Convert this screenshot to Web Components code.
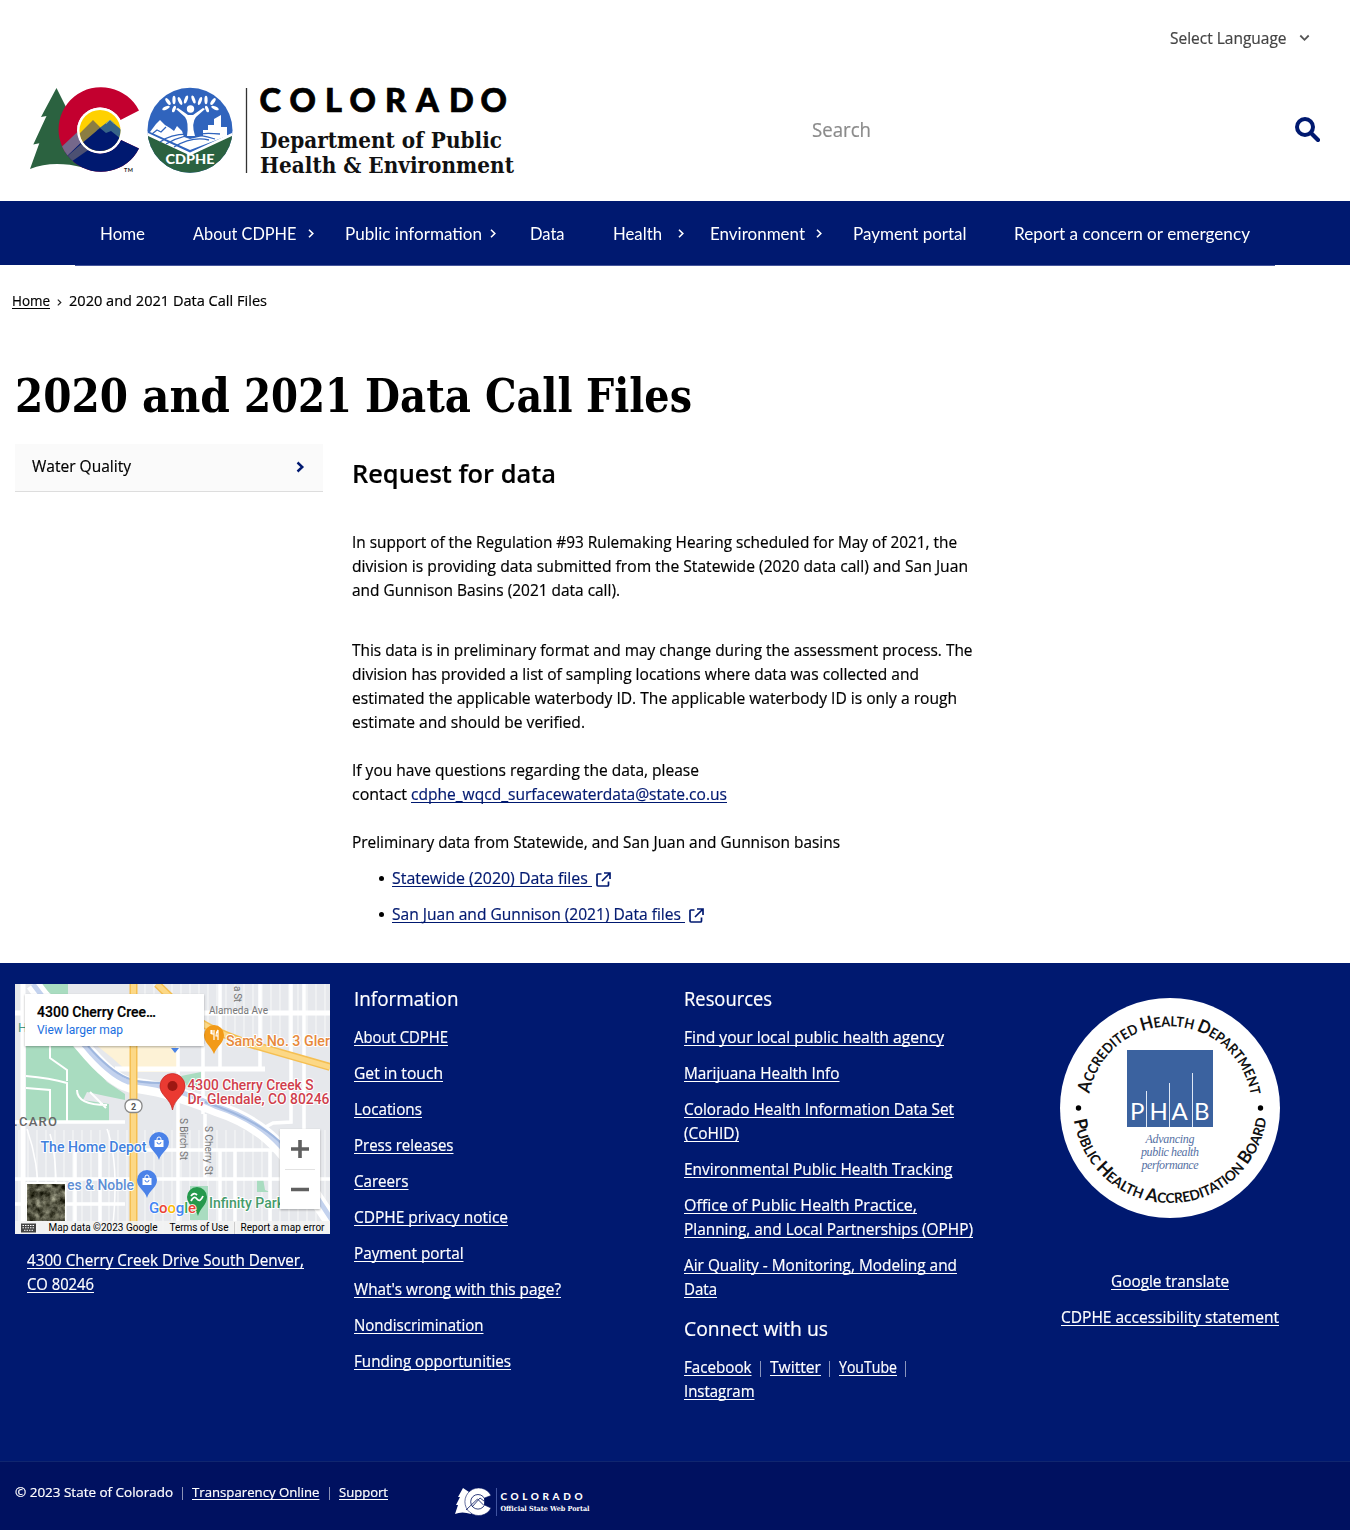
<!DOCTYPE html>
<html lang="en">
<head>
<meta charset="utf-8">
<title>2020 and 2021 Data Call Files | Colorado Department of Public Health and Environment</title>
<style>
html,body{margin:0;padding:0;background:#fff}
body{font:16px/24px "Open Sans","Noto Sans",sans-serif;color:#000;--navy:#001970}
</style>
</head>
<body>
<cdphe-page></cdphe-page>
<script>
/* Single line of copy, set to a fixed measure given in the w attribute. */
class FitText extends HTMLElement {
  connectedCallback() {
    if (this.shadowRoot) return;
    this.attachShadow({mode: 'open'}).innerHTML = `<style>
      :host{display:inline-block;white-space:nowrap;-webkit-text-stroke:var(--ink,.2px)}
      span{display:inline-block;transform-origin:0 50%;white-space:pre}
      :host([u]) span{text-decoration:underline;text-decoration-thickness:1px;text-underline-offset:2px;text-decoration-skip-ink:none}
    </style><span><slot></slot></span>`;
  }
  fit() {
    const w = +this.getAttribute('w'), s = this.shadowRoot.querySelector('span');
    if (!w || !s.offsetWidth) return;
    const n = s.getBoundingClientRect().width;
    this.style.width = w + 'px';
    s.style.transform = `scaleX(${w / n})`;
  }
}
customElements.define('fit-text', FitText);

const define = (name, html) => customElements.define(name, class extends HTMLElement {
  connectedCallback() {
    if (!this.shadowRoot) this.attachShadow({mode: 'open'}).innerHTML = html;
  }
});

define('cdphe-logo', `<style>:host{display:block;width:486px;height:88px}svg{display:block;overflow:visible}</style>
<svg width="486" height="88" viewBox="0 0 486 88">
<defs><clipPath id="c"><path d="M109 22.500A42.500 42.300 0 1 0 109 60.500L91 52A23 23 0 1 1 90.500 32Z"/></clipPath>
<clipPath id="d"><circle cx="70" cy="42.500" r="20.500"/></clipPath><clipPath id="e"><circle cx="160" cy="42.300" r="42.500"/></clipPath></defs>
<path fill="#2b6240" d="M26.500 0 11 29 16.500 28 3.300 56.500 9.300 55.200 0 81Q23 72 53 79.500L46 30 39 25Z"/>
<g clip-path="url(#c)"><path fill="#c3002f" d="M20-5h100v100H20z"/><path fill="#001970" d="M28 72 52 46h70v50H28z"/><path fill="#75688b" d="M26 64 58 34 62 44 33 72z"/><path fill="#4c5072" d="M33 72 58 50 64 58 38 76z"/></g>
<circle cx="70" cy="42.500" r="23" fill="#fff"/>
<g clip-path="url(#d)"><path fill="#ffd100" d="M45 15h50v50H45z"/><path fill="#8b7d42" d="M45 50 63 32 70 39 76 44 62 65H45z"/><path fill="#376487" d="M67 42 80 32 94 44V60H60z"/><path fill="#001970" d="M44 62 70 40 76 45 81 43 96 55V70H44z"/></g>
<path d="M76 36 80 32 84 35.500" fill="none" stroke="#6f9d9c" stroke-width="1"/>
<text x="94" y="83.500" font-family="Lato" font-weight="700" font-size="5.500" textLength="9" fill="#222">TM</text>
<g clip-path="url(#e)"><path fill="#3064bd" d="M115-2h90v90h-90z"/><path fill="#2b6240" d="M115 45 160 67 205 45V90H115z"/>
<path fill="none" stroke="#fff" stroke-width="2.600" d="M116 45.500 160 66 204 45.500"/>
<path fill="#fff" d="M120 44 126 36 130 32 135 37 140 40 144 43 147 38 152 43 154 49 160 51 173 48V42H178V37H184V31L191 27V39H197V48L160 62Z"/>
<path fill="none" stroke="#3064bd" stroke-width="1.300" d="M130 54Q149 40 185 51M136 56Q158 43 190 46M144 59Q162 48 179 52M122 46 127 42 131 44 136 39"/>
<path fill="#fff" d="M157 48Q159 34 155 29L146 21 148 20 158 27H163L173 20 175 21 166 29Q161 35 165 48Z"/><circle cx="160.500" cy="21" r="3.700" fill="#fff"/>
<g fill="#fff"><ellipse cx="138" cy="13.500" rx="1.700" ry="4" transform="rotate(-35 138 13.500)"/><ellipse cx="144" cy="12" rx="1.600" ry="4.200"/><ellipse cx="150" cy="13" rx="1.600" ry="4.200" transform="rotate(-25 150 13)"/><ellipse cx="156" cy="11.500" rx="1.600" ry="4.200" transform="rotate(20 156 11.500)"/><ellipse cx="163.500" cy="11.500" rx="1.600" ry="4.200" transform="rotate(-20 163.500 11.500)"/><ellipse cx="170" cy="13" rx="1.600" ry="4.200" transform="rotate(20 170 13)"/><ellipse cx="176" cy="12" rx="1.600" ry="4.200"/><ellipse cx="183" cy="13.500" rx="1.700" ry="4" transform="rotate(35 183 13.500)"/><ellipse cx="136" cy="20" rx="1.600" ry="4" transform="rotate(65 136 20)"/><ellipse cx="144" cy="21" rx="1.600" ry="3.500" transform="rotate(20 144 21)"/><ellipse cx="177" cy="21" rx="1.600" ry="3.500" transform="rotate(-20 177 21)"/><ellipse cx="185" cy="20" rx="1.600" ry="4" transform="rotate(-65 185 20)"/></g></g>
<text x="135.500" y="76" font-family="Lato" font-weight="900" font-size="14" textLength="49" lengthAdjust="spacingAndGlyphs" fill="#fff">CDPHE</text>
<path stroke="#333" stroke-width="1.300" d="M216.500 0V85"/>
<text x="229.500 259.500 295 319.500 355 386 419 450.500" y="24" font-family="Lato" font-weight="900" font-size="32.500" stroke="#000" stroke-width=".7">COLORADO</text>
<g font-family="DejaVu Serif" font-weight="700" font-size="21.500" fill="#111"><text x="230" y="60" textLength="242" lengthAdjust="spacingAndGlyphs">Department of Public</text>
<text x="230" y="84.500" textLength="254" lengthAdjust="spacingAndGlyphs">Health &amp; Environment</text></g></svg>`);

define('site-header', `<style>
:host{display:flex;flex-direction:column;height:201px}
.top{display:flex;justify-content:flex-end;align-items:center;height:76px;padding-right:40px;gap:13px;color:#444}
.row{display:flex;align-items:center;padding:0 30px;margin-top:12px}
cdphe-logo{margin-right:296px}
.s{flex:1;font-size:20px;color:#8b8b8b;margin-top:-4px}
.row>svg{display:block;margin-top:-5px}
</style>
<div class="top"><fit-text w="116.500">Select Language</fit-text><svg width="11" height="8" viewBox="0 0 11 8"><path d="M1.300 1.500 5.500 5.800 9.700 1.500" fill="none" stroke="#555" stroke-width="1.800"/></svg></div>
<div class="row"><cdphe-logo></cdphe-logo><div class="s"><fit-text w="59">Search</fit-text></div>
<svg width="25" height="25" viewBox="0 0 25 25" fill="none" stroke="#001970"><circle cx="10" cy="10" r="8" stroke-width="4"/><path d="M16 16 23 23" stroke-width="4.200" stroke-linecap="round"/></svg></div>`);

/* Top-level menu entry; the arrow attribute adds the submenu chevron. */
customElements.define('nav-item', class extends HTMLElement {
  connectedCallback() {
    if (this.shadowRoot) return;
    const g = this.getAttribute('arrow');
    this.attachShadow({mode: 'open'}).innerHTML = `<style>:host{display:flex;align-items:center}svg{margin-left:${g}px}</style><slot></slot>` +
      (g ? '<svg width="6" height="9" viewBox="0 0 6 9"><path d="M1 .8 4.800 4.500 1 8.200" fill="none" stroke="#fff" stroke-width="1.600"/></svg>' : '');
  }
});

define('main-nav', `<style>
:host{display:block;background:var(--navy);color:#fff;height:64px;--ink:0}
nav{display:flex;align-items:center;box-sizing:border-box;height:65px;margin:0 75px;padding:1px 0 0 25px;border-bottom:1px solid #45559b;font:16.500px/24px Lato,sans-serif}
nav-item+nav-item{margin-left:var(--g,48px)}
</style><nav>
<nav-item><fit-text w="45">Home</fit-text></nav-item>
<nav-item arrow="11"><fit-text w="103.500">About CDPHE</fit-text></nav-item>
<nav-item arrow="7.500" style="--g:31.500px"><fit-text w="137">Public information</fit-text></nav-item>
<nav-item style="--g:34.500px"><fit-text w="34.500">Data</fit-text></nav-item>
<nav-item arrow="16"><fit-text w="49">Health</fit-text></nav-item>
<nav-item arrow="11.500" style="--g:26px"><fit-text w="95">Environment</fit-text></nav-item>
<nav-item style="--g:30.500px"><fit-text w="113.500">Payment portal</fit-text></nav-item>
<nav-item><fit-text w="236">Report a concern or emergency</fit-text></nav-item></nav>`);

define('bread-crumb', `<style>:host{display:flex;align-items:center;gap:7px;height:24px;padding:24px 12px 0;font-size:14px}svg{margin-top:2px}</style>
<fit-text u w="38">Home</fit-text><svg width="5" height="7" viewBox="0 0 5 7"><path d="M.8.600 3.800 3.500.8 6.400" fill="none" stroke="#222" stroke-width="1.200"/></svg><fit-text w="198">2020 and 2021 Data Call Files</fit-text>`);

define('side-menu', `<style>:host{display:flex;align-items:center;justify-content:space-between;box-sizing:border-box;width:308px;height:48px;padding:0 18px 0 17px;background:#fafafa;border-bottom:1px solid #ddd;margin-top:1px}fit-text{margin-top:-3px}svg{margin-top:-1px}</style>
<fit-text w="99">Water Quality</fit-text><svg width="9" height="12" viewBox="0 0 9 12"><path d="M1.500 1.500 6.300 6 1.500 10.500" fill="none" stroke="#001970" stroke-width="2.400"/></svg>`);

customElements.define('ext-link', class extends HTMLElement {
  connectedCallback() {
    if (this.shadowRoot) return;
    this.attachShadow({mode: 'open'}).innerHTML = `<style>:host{display:flex;align-items:center;margin-bottom:12px;color:var(--navy)}i{width:5px;height:5px;border-radius:50%;background:#000;margin:1px 8px 0 0}svg{margin:3px 0 0 4px}</style>
    <i></i><slot></slot><svg width="15" height="15" viewBox="0 0 15 15" fill="none" stroke="#001970" stroke-width="1.700"><path d="M5.500 2H1.900Q1 2 1 3V13.100Q1 14 2 14H11.500Q12.500 14 12.500 13V9.500M8 1H14V7M14 1 6 9"/></svg>`;
  }
});

define('page-body', `<style>
:host{display:block;height:650px;padding-left:15px}
h1{margin:0;display:flex;gap:13.800px;font:bold 46px/60px "DejaVu Serif",serif;--ink:0}
.cols{display:flex;align-items:flex-start;margin-top:17px}
main{margin-left:29.400px}
h2{margin:13px 0 0;font:600 25.500px/34px "Open Sans",sans-serif}
p{margin:0 0 24px;display:flex;flex-direction:column;align-items:flex-start}
h2+p{margin-top:40px;margin-bottom:36px}
.l{display:flex;gap:4px}
a{color:var(--navy)}
.ul{margin:-12px 0 0 26.500px}
</style>
<h1><fit-text w="113">2020</fit-text><fit-text w="88">and</fit-text><fit-text w="108">2021</fit-text><fit-text w="106">Data</fit-text><fit-text w="87.500">Call</fit-text><fit-text w="106">Files</fit-text></h1>
<div class="cols"><side-menu></side-menu><main>
<h2><fit-text w="204">Request for data</fit-text></h2>
<p><fit-text w="605">In support of the Regulation #93 Rulemaking Hearing scheduled for May of 2021, the</fit-text><fit-text w="616">division is providing data submitted from the Statewide (2020 data call) and San Juan</fit-text><fit-text w="268">and Gunnison Basins (2021 data call).</fit-text></p>
<p><fit-text w="620.500">This data is in preliminary format and may change during the assessment process. The</fit-text><fit-text w="567">division has provided a list of sampling locations where data was collected and</fit-text><fit-text w="605">estimated the applicable waterbody ID. The applicable waterbody ID is only a rough</fit-text><fit-text w="233">estimate and should be verified.</fit-text></p>
<p><fit-text w="347">If you have questions regarding the data, please</fit-text><span class="l"><fit-text w="55">contact</fit-text><a><fit-text u w="316">cdphe_wqcd_surfacewaterdata@state.co.us</fit-text></a></span></p>
<p><fit-text w="488">Preliminary data from Statewide, and San Juan and Gunnison basins</fit-text></p>
<div class="ul"><ext-link><fit-text u w="200">Statewide (2020) Data files&nbsp;</fit-text></ext-link><ext-link><fit-text u w="293">San Juan and Gunnison (2021) Data files&nbsp;</fit-text></ext-link></div>
</main></div>`);

define('map-card', `<style>:host{display:block;width:315px;height:250px}svg{display:block}</style>
<svg width="315" height="250" viewBox="0 0 315 250" font-family="Roboto" style="overflow:hidden">
<defs><pattern id="g" width="9" height="500" patternUnits="userSpaceOnUse"><path d="M4 0V500" stroke="#f8f9fa" stroke-width="1.400"/></pattern>
<filter id="n" x="0" y="0" width="1" height="1" color-interpolation-filters="sRGB"><feTurbulence type="fractalNoise" baseFrequency=".14" numOctaves="4" seed="4"/><feColorMatrix values=".8 .3 0 0 -.2 .8 .3 0 0 -.2 .75 .27 0 0 -.23 0 0 0 0 1"/></filter>
<filter id="s" x="-10%" y="-10%" width="120%" height="130%"><feDropShadow dx="0" dy="1" stdDeviation="1.200" flood-opacity=".3"/></filter></defs>
<path fill="#e6e8ec" d="M0 0h315v250H0z"/><path fill="url(#g)" opacity=".7" d="M0 146h315v104H0zM122 0h193v60H122z"/>
<path fill="#a9dcc0" d="M24 0h29v10H36zM11 62H62L92 98 110 110V116Q90 112 72 108L68 116 94 120V137H11z"/>
<path fill="#fdf2d6" d="M80 58h83v30h-50Q98 74 80 60z"/><path fill="#a9dcc0" d="M175 202h18v34h-18zM166 92l20-4v14h-14zM242 196l6-2 2 12 5 2h-13z"/>
<g fill="none" stroke="#fff"><path stroke-width="5" d="M8 0V250M0 29H315M100 85H250"/><path stroke-width="3.500" d="M0 138H110M120 166H265M163 166V250M0 195H315M163 60V195M188 60V130M205 0V85M245 0V85M276 0V138L258 139 245 146M289 0V195M190 130V195M205 166V250M60 166V250M85 166V250M220 166V250M255 166V250M0 220H110"/><path stroke-width="2" d="M11 92Q35 94 52 99V137M35 62V74L52 86V97M62 106Q62 121 92 121M11 104 35 106V137M75 108 91 124"/><path stroke-width="1.500" d="M12 145Q28 190 22 250M35 150Q44 180 40 250M92 145Q105 180 97 250"/>
<path stroke-width="15" d="M18 0Q43 34 68 62 Q96 96 115 101 148 103 200 124C250 140 266 166 276 177L322 246"/></g>
<path d="M18 0Q43 34 70 62Q94 91 113 98 148 98 200 122C250 138 266 163 277 175L322 244" fill="none" stroke="#c3d2ee" stroke-width="5"/>
<path d="M73 62Q95 87 112 94 122 99 145 99M190 118Q240 135 264 157L292 188" fill="none" stroke="#9fb7df" stroke-width="2"/>
<path d="M118.500 0V250M142 0Q170 28 185 38T235 60L315 83" fill="none" stroke="#f5bf52" stroke-width="8"/><path d="M118.500 0V250M142 0Q170 28 185 38T235 60L315 83" fill="none" stroke="#fcd886" stroke-width="5"/>
<rect x="110" y="115.500" width="17" height="13" rx="6" fill="#fff" stroke="#888" stroke-width="1.300"/><text x="118.500" y="126" font-size="9" font-weight="700" text-anchor="middle" fill="#555">2</text>
<g fill="#777" font-size="10"><text x="194" y="30" textLength="59">Alameda Ave</text><text transform="translate(219 2) rotate(90)" textLength="16">a St</text><text transform="translate(165 134) rotate(90)" textLength="42">S Birch St</text><text transform="translate(190 142) rotate(90)" textLength="49">S Cherry St</text></g>
<text x="-1" y="142" font-size="13" font-weight="500" fill="#666" textLength="43">.CARO</text><text x="3" y="48" font-size="13" fill="#4a9a87">H</text>
<g font-size="14" font-weight="500" stroke="#fff" stroke-width="2" paint-order="stroke" stroke-linejoin="round"><text x="211" y="62" fill="#e7893b" textLength="104" lengthAdjust="spacingAndGlyphs">Sam's No. 3 Gler</text><text x="172.500" y="106" fill="#cf3e4c" textLength="126" lengthAdjust="spacingAndGlyphs">4300 Cherry Creek S</text><text x="172.500" y="119.500" fill="#cf3e4c" textLength="142" lengthAdjust="spacingAndGlyphs">Dr, Glendale, CO 80246</text><text x="25.500" y="168" fill="#4080dd" textLength="106" lengthAdjust="spacingAndGlyphs">The Home Depot</text><text x="52" y="206" fill="#5e8fd4" textLength="67" lengthAdjust="spacingAndGlyphs">es &amp; Noble</text><text x="194" y="224" fill="#449b6b" textLength="75" lengthAdjust="spacingAndGlyphs">Infinity Park</text></g>
<path fill="#4a83e5" d="M156 64h8l-4 5z"/>
<path fill="#f29a18" d="M199 70C196 62 189 59 189 51a10 10 0 0 1 20 0C209 59 202 62 199 70z"/><path d="M196 46v4M199 46v10M197 46v4h2M203 46v10M203 46Q201 48 201 52h2" fill="none" stroke="#fff" stroke-width="1.200"/>
<path fill="#4b82e8" d="M144 176C142 168 134 166 134 158a10 10 0 0 1 20 0C154 166 146 168 144 176z"/><path fill="#fff" d="M139.500 156h9v7h-9z"/><path d="M142 156v-1a2 2 0 0 1 4 0v1" fill="none" stroke="#fff"/><path d="M142 158a2 2 0 0 0 4 0" fill="none" stroke="#4b82e8"/>
<g transform="translate(-12 38)"><path fill="#4b82e8" d="M144 176C142 168 134 166 134 158a10 10 0 0 1 20 0C154 166 146 168 144 176z"/><path fill="#fff" d="M139.500 156h9v7h-9z"/><path d="M142 156v-1a2 2 0 0 1 4 0v1" fill="none" stroke="#fff"/><path d="M142 158a2 2 0 0 0 4 0" fill="none" stroke="#4b82e8"/></g>
<path fill="#25994c" d="M183 232C181 224 172 221 172 213a10 10 0 0 1 20 0C192 221 185 224 183 232z"/><path d="M176 217q3-6 6-2t6-3M176 212q3-4 6-1" fill="none" stroke="#fff" stroke-width="1.800"/>
<path fill="#ea3a32" stroke="#c5221f" stroke-width=".7" d="M157.500 126C155.500 114 145 112 145 102a12.500 12.500 0 0 1 25 0C170 112 159.500 114 157.500 126z"/><circle cx="157.500" cy="102" r="5" fill="#9d1712"/>
<path fill="#fff" filter="url(#s)" d="M10 10h179v52H10zM265 145h40v80h-40z"/>
<text x="22" y="33" font-size="14" font-weight="500" fill="#000" stroke="#000" stroke-width=".2" textLength="119">4300 Cherry Cree…</text><text x="22" y="50" font-size="12" fill="#1a6ee0" textLength="86">View larger map</text>
<path d="M276 165h18M285 156v18M276 205.500h18" stroke="#606060" stroke-width="3.600" fill="none"/><path d="M270 185.500h30" stroke="#e2e2e2"/>
<path fill="#fff" d="M10.500 198h41v41h-41z"/><rect x="12" y="200" width="38" height="37" filter="url(#n)"/>
<text x="134" y="229" font-size="15" font-weight="500" textLength="47" stroke="#fff" stroke-width="1.500" paint-order="stroke"><tspan fill="#4285f4">G</tspan><tspan fill="#ea4335">o</tspan><tspan fill="#fbbc05">o</tspan><tspan fill="#4285f4">g</tspan><tspan fill="#34a853">l</tspan><tspan fill="#ea4335">e</tspan></text>
<path fill="#f2f2f2" opacity=".88" d="M0 237h315v13H0z"/><path fill="#444" d="M6 239.500h15v9H6z"/><path d="M7.500 241.500h12M7.500 243.800h12M9 246.300h9" stroke="#fff" stroke-dasharray="1.500 1"/>
<g font-size="10" fill="#000"><text x="33.500" y="247" textLength="109">Map data ©2023 Google</text><text x="154.500" y="247" textLength="59">Terms of Use</text><text x="225.500" y="247" textLength="84">Report a map error</text></g><path d="M219.500 238v12" stroke="#ccc"/></svg>`);

define('phab-seal', `<style>:host{display:block;width:220px;height:220px}svg{display:block}.b{font-size:18px}</style>
<svg width="220" height="220" viewBox="0 0 220 220"><defs><path id="t" d="M29.500 95.700A81.800 81.800 0 0 1 190.500 95.700"/><path id="u" d="M14 122A97 97 0 0 0 206 122"/></defs>
<circle cx="110" cy="110" r="110" fill="#fff"/>
<g font-family="Lato" font-weight="700" font-size="14" fill="#111"><text textLength="229"><textPath href="#t" textLength="229" lengthAdjust="spacingAndGlyphs"><tspan class="b">A</tspan>CCREDITED <tspan class="b">H</tspan>EALTH <tspan class="b">D</tspan>EPARTMENT</textPath></text>
<text textLength="278"><textPath href="#u" textLength="278" lengthAdjust="spacingAndGlyphs"><tspan class="b">P</tspan>UBLIC <tspan class="b">H</tspan>EALTH <tspan class="b">A</tspan>CCREDITATION <tspan class="b">B</tspan>OARD</textPath></text></g>
<circle cx="18.500" cy="110" r="2.700"/><circle cx="200.500" cy="110" r="2.700"/>
<path fill="#3b629f" d="M67 52h86v77H67z"/><path d="M86.500 93v36M109.500 85v44M132.500 75v54" stroke="#dfe8f5"/>
<text x="70 89.500 111.500 134" y="122" font-family="Lato" font-size="24" fill="#fff">PHAB</text>
<g font-family="Liberation Serif" font-style="italic" font-size="12" fill="#5570a3" text-anchor="middle"><text x="110" y="145" textLength="49">Advancing</text><text x="110" y="158" textLength="58">public health</text><text x="110" y="171" textLength="57">performance</text></g></svg>`);

define('portal-logo', `<style>:host{display:block}svg{display:block}</style>
<svg width="138" height="30" viewBox="0 0 138 30"><path fill="#fff" d="M8 1 3 10 5 10 1 18H3L0 27Q7 24 16 27L18 20 14 5z"/><path fill="#fff" stroke="#001160" stroke-width=".6" d="M36 8.500A13.800 13.800 0 1 0 36 21L29.500 18 29.500 11Z"/><g fill="none" stroke="#001160" stroke-width=".8"><circle cx="23" cy="14.800" r="7.300"/><path d="M11 23 22.500 12 28.500 18M17 20 25 11 29 14"/></g><path d="M41.500 1V29" stroke="#4053a0"/>
<text x="45.500" y="12.500" font-family="Lato" font-weight="900" font-size="10" fill="#fff" textLength="82">COLORADO</text><text x="45.500" y="24" font-family="DejaVu Serif" font-weight="700" font-size="7" fill="#fff" textLength="89" lengthAdjust="spacingAndGlyphs">Official State Web Portal</text></svg>`);

define('site-footer', `<style>
:host{display:block;background:var(--navy);color:#fff}
.main{display:flex;padding:20.500px 15px 0;box-sizing:border-box;height:498px}
.c1{width:339px}.c2{width:330px}.c3{width:321px}.c4{width:330px;display:flex;flex-direction:column;align-items:center}
.addr{margin:14px 0 0 12px;display:flex;flex-direction:column;align-items:flex-start}
h3{margin:0 0 14px;padding-top:3px;font-weight:400;font-size:19.500px;line-height:24px}
.i{display:flex;flex-direction:column;align-items:flex-start;margin-bottom:12px;line-height:24px}
.i+h3{padding-top:4px}
.r{display:flex;gap:7.500px}
phab-seal{margin:14px 0 51px}
.bar{display:flex;align-items:flex-start;height:69px;box-sizing:border-box;padding:18px 15px 0;background:#001160;border-top:1px solid #10266f;font-size:13.500px;gap:8.100px}
portal-logo{margin:7px 0 0 59.500px}
</style>
<div class="main">
<div class="c1"><map-card></map-card><div class="addr"><fit-text u w="277">4300 Cherry Creek Drive South Denver,</fit-text><fit-text u w="67">CO 80246</fit-text></div></div>
<div class="c2"><h3><fit-text w="104.500">Information</fit-text></h3>
<div class="i"><fit-text u w="94">About CDPHE</fit-text></div><div class="i"><fit-text u w="89">Get in touch</fit-text></div><div class="i"><fit-text u w="68">Locations</fit-text></div><div class="i"><fit-text u w="99.500">Press releases</fit-text></div><div class="i"><fit-text u w="54.500">Careers</fit-text></div><div class="i"><fit-text u w="154">CDPHE privacy notice</fit-text></div><div class="i"><fit-text u w="109.500">Payment portal</fit-text></div><div class="i"><fit-text u w="207">What's wrong with this page?</fit-text></div><div class="i"><fit-text u w="129.500">Nondiscrimination</fit-text></div><div class="i"><fit-text u w="157">Funding opportunities</fit-text></div></div>
<div class="c3"><h3><fit-text w="88">Resources</fit-text></h3>
<div class="i"><fit-text u w="260">Find your local public health agency</fit-text></div><div class="i"><fit-text u w="155.500">Marijuana Health Info</fit-text></div>
<div class="i"><fit-text u w="270">Colorado Health Information Data Set</fit-text><fit-text u w="55">(CoHID)</fit-text></div>
<div class="i"><fit-text u w="268.500">Environmental Public Health Tracking</fit-text></div>
<div class="i"><fit-text u w="233">Office of Public Health Practice,</fit-text><fit-text u w="289">Planning, and Local Partnerships (OPHP)</fit-text></div>
<div class="i"><fit-text u w="273">Air Quality - Monitoring, Modeling and</fit-text><fit-text u w="33">Data</fit-text></div>
<h3><fit-text w="144">Connect with us</fit-text></h3>
<div class="i"><div class="r"><fit-text u w="67.500">Facebook</fit-text><fit-text w="3">|</fit-text><fit-text u w="51">Twitter</fit-text><fit-text w="3">|</fit-text><fit-text u w="58">YouTube</fit-text><fit-text w="3">|</fit-text></div><fit-text u w="70.500">Instagram</fit-text></div></div>
<div class="c4"><phab-seal></phab-seal><div class="i"><fit-text u w="118">Google translate</fit-text></div><div class="i"><fit-text u w="218">CDPHE accessibility statement</fit-text></div></div>
</div>
<div class="bar"><fit-text w="158">© 2023 State of Colorado</fit-text><fit-text w="3">|</fit-text><fit-text u w="127.500">Transparency Online</fit-text><fit-text w="3">|</fit-text><fit-text u w="49">Support</fit-text><portal-logo></portal-logo></div>`);

define('cdphe-page', `<style>:host{display:flex;flex-direction:column;width:1350px;height:1530px;overflow:hidden}bread-crumb{margin-bottom:53px}page-body{box-sizing:border-box;height:597px}</style>
<site-header></site-header><main-nav></main-nav><bread-crumb></bread-crumb><page-body></page-body><site-footer></site-footer>`);

const fitAll = root => root.querySelectorAll('*').forEach(el => {
  if (el instanceof FitText) el.fit();
  else if (el.shadowRoot) fitAll(el.shadowRoot);
});
fitAll(document);
</script>
</body>
</html>
